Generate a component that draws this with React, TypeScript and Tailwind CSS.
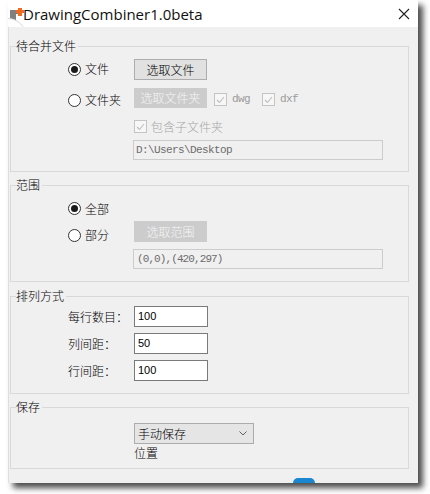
import React from "react";

const CJK = { fontFamily: '"Noto Sans CJK SC", "Noto Sans", sans-serif' };
const MONO = { fontFamily: '"Liberation Mono", "DejaVu Sans Mono", monospace' };

function Radio({ checked }: { checked?: boolean }) {
  return (
    <span className="w-[13px] h-[13px] rounded-full border border-[#333333] bg-white flex items-center justify-center shrink-0">
      {checked && <span className="w-[7px] h-[7px] rounded-full bg-[#1a1a1a]" />}
    </span>
  );
}

function Check() {
  return (
    <span className="w-[13px] h-[13px] border border-[#c4c4c4] bg-[#f7f7f7] flex items-center justify-center shrink-0">
      <svg width="9" height="8" viewBox="0 0 9 8">
        <path d="M1 4 L3.5 6.5 L8 1" fill="none" stroke="#bdbdbd" strokeWidth="1.1" />
      </svg>
    </span>
  );
}

function Group({ title, h, children, className = "" }: { title: string; h: string; children: React.ReactNode; className?: string }) {
  return (
    <fieldset className={`border border-[#d9d9d9] ml-[1px] w-[399px] ${h} ${className}`}>
      <legend className="ml-[5px] pr-[2px] text-[12px] leading-[16px] text-black font-light" style={CJK}>
        {title}
      </legend>
      {children}
    </fieldset>
  );
}

export default function App() {
  return (
    <div className="w-[430px] h-[494px] bg-white relative overflow-hidden font-light" style={CJK}>
      <div className="ml-[8px] w-[410px] shadow-[5px_5px_6px_rgba(0,0,0,0.7)] relative">
        {/* title bar */}
        <div className="h-[27px] bg-white flex items-center relative overflow-hidden">
          <svg width="18" height="20" viewBox="0 0 18 20" className="ml-[1px] mt-[6px] shrink-0">
            <rect x="1" y="3" width="6" height="15" fill="#808080" />
            <rect x="1" y="3" width="12" height="4" fill="#808080" />
            <rect x="9" y="1" width="4" height="8" fill="#f26a21" />
            <rect x="7" y="3" width="8" height="3" fill="#f26a21" />
          </svg>
          <span className="text-[15px] leading-[20px] text-[#111] -ml-[4px] font-normal" style={{ fontFamily: '"Open Sans", "Noto Sans", sans-serif' }}>
            DrawingCombiner1.0beta
          </span>
          <div className="absolute -left-[18px] top-[18px] w-[36px] h-[36px] rounded-full bg-white border border-[#d6d6d6]" />
          <svg width="12" height="12" viewBox="0 0 12 12" className="absolute left-[390px] top-[8px]">
            <path d="M1 1 L11 11 M11 1 L1 11" stroke="#222" strokeWidth="1.1" />
          </svg>
        </div>
        {/* body */}
        <div className="h-[456px] bg-[#f0f0f0] border-l border-[#dedede] pt-[11px]">
          <Group title="待合并文件" h="h-[134px]">
            <div className="pl-[57px] text-[12px] text-black">
              <div className="flex items-start mt-[5px] h-[21px]">
                <label className="w-[66px] flex items-center gap-[4px] mt-[3px] leading-[14px]">
                  <Radio checked />
                  <span>文件</span>
                </label>
                <button className="w-[73px] h-[21px] bg-[#e1e1e1] border border-[#adadad] text-[12px] leading-[19px] text-black font-light" style={CJK}>
                  选取文件
                </button>
              </div>
              <div className="flex items-start mt-[8px] h-[20px]">
                <label className="w-[66px] flex items-center gap-[4px] mt-[5px] leading-[14px]">
                  <Radio />
                  <span>文件夹</span>
                </label>
                <div className="w-[73px] h-[20px] bg-[#cccccc] text-[12px] leading-[20px] text-center text-[#f5f5f5]">
                  选取文件夹
                </div>
                <div className="flex items-center ml-[7px] mt-[5px] gap-[5px]">
                  <Check />
                  <span className="text-[11px] leading-[13px] text-[#9a9a9a] tracking-[-0.6px]" style={MONO}>dwg</span>
                </div>
                <div className="flex items-center ml-[12px] mt-[5px] gap-[5px]">
                  <Check />
                  <span className="text-[11px] leading-[13px] text-[#9a9a9a] tracking-[-0.6px]" style={MONO}>dxf</span>
                </div>
              </div>
              <div className="flex items-center mt-[12px] h-[13px] pl-[66px] gap-[4px]">
                <Check />
                <span className="text-[12px] leading-[13px] text-[#a6a6a6]">包含子文件夹</span>
              </div>
              <div className="mt-[7px] ml-[65px] w-[250px] h-[20px] border border-[#cccccc] bg-[#f0f0f0] flex items-center pl-[2px]">
                <span className="text-[11px] text-[#6d6d6d] tracking-[-0.6px]" style={MONO}>D:\Users\Desktop</span>
              </div>
            </div>
          </Group>

          <Group title="范围" h="h-[105px]" className="mt-[5px]">
            <div className="pl-[57px] text-[12px] text-black">
              <label className="flex items-center gap-[4px] mt-[9px] h-[13px] leading-[14px]">
                <Radio checked />
                <span>全部</span>
              </label>
              <div className="flex items-start mt-[6px] h-[21px]">
                <label className="w-[66px] flex items-center gap-[4px] mt-[7px] leading-[14px]">
                  <Radio />
                  <span>部分</span>
                </label>
                <div className="w-[73px] h-[21px] bg-[#cccccc] text-[12px] leading-[21px] text-center text-[#f5f5f5]">
                  选取范围
                </div>
              </div>
              <div className="mt-[7px] ml-[65px] w-[250px] h-[20px] border border-[#cccccc] bg-[#f0f0f0] flex items-center pl-[3px]">
                <span className="text-[11px] text-[#6d6d6d] tracking-[-0.9px]" style={MONO}>(0,0),(420,297)</span>
              </div>
            </div>
          </Group>

          <Group title="排列方式" h="h-[106px]" className="mt-[6px]">
            <div className="pl-[57px] text-[12px] text-black flex flex-col gap-[6px] mt-[2px]">
              {[
                ["每行数目：", "100"],
                ["列间距：", "50"],
                ["行间距：", "100"],
              ].map(([l, v]) => (
                <div key={l} className="flex items-center h-[21px]">
                  <span className="w-[66px] leading-[14px]">{l}</span>
                  <div className="w-[74px] h-[21px] border border-[#7a7a7a] bg-white flex items-center pl-[3px]">
                    <span className="text-[11px] text-black font-normal" style={{ fontFamily: '"Liberation Sans", Arial, sans-serif' }}>{v}</span>
                  </div>
                </div>
              ))}
            </div>
          </Group>

          <Group title="保存" h="h-[70px]" className="mt-[5px]">
            <div className="pl-[123px] text-[12px] text-black">
              <div className="mt-[8px] w-[120px] h-[21px] bg-[#e5e5e5] border border-[#acacac] flex items-center justify-between pl-[3px] pr-[6px]">
                <span className="text-[12px] leading-[14px]">手动保存</span>
                <svg width="8" height="5" viewBox="0 0 8 5">
                  <path d="M0.5 0.5 L4 4 L7.5 0.5" fill="none" stroke="#606060" strokeWidth="1" />
                </svg>
              </div>
              <div className="mt-[1px] leading-[16px]">位置</div>
            </div>
          </Group>
        </div>
        <div className="absolute left-[285px] top-[478px] w-[22px] h-[5px] rounded-t-full bg-[#1a87d0]" />
      </div>
    </div>
  );
}
